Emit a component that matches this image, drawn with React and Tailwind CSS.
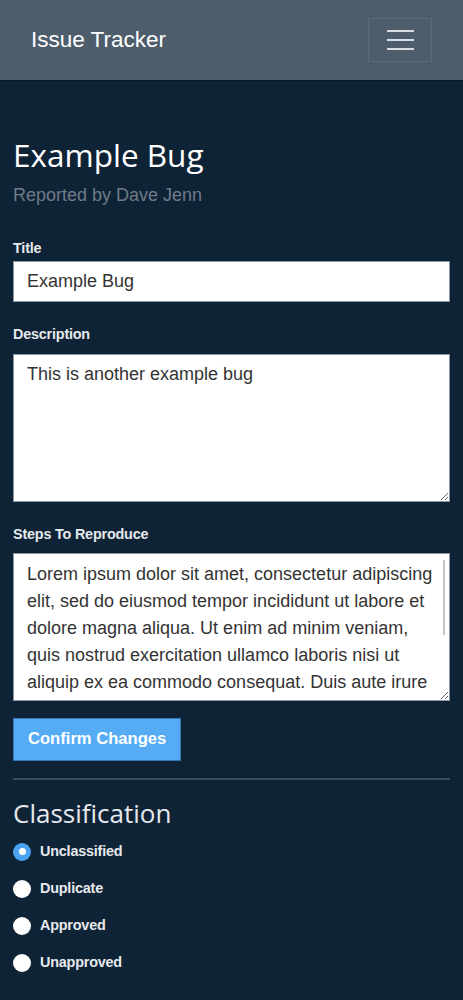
const steps =
    "Lorem ipsum dolor sit amet, consectetur adipiscing elit, sed do eiusmod tempor incididunt ut labore et dolore magna aliqua. Ut enim ad minim veniam, quis nostrud exercitation ullamco laboris nisi ut aliquip ex ea commodo consequat. Duis aute irure dolor in reprehenderit in voluptate velit esse cillum dolore eu fugiat nulla pariatur."

const options = ["Unclassified", "Duplicate", "Approved", "Unapproved"]

const App = () => {
    return (
        <div className="min-h-[1000px] bg-[#0f2337] font-['Liberation_Sans',Arial,sans-serif]">
            <nav className="h-[81px] bg-[#4e5d6c] border-b border-[#0c1b2a] flex items-center justify-between pl-[31px] pr-[31px]">
                <span className="text-[22.5px] text-white">Issue Tracker</span>
                <button className="w-[64px] h-[44px] border border-[#5b6a79] flex flex-col items-center justify-center gap-[7px]">
                    <span className="block w-[27px] h-[2px] bg-[#d9dde1]"></span>
                    <span className="block w-[27px] h-[2px] bg-[#d9dde1]"></span>
                    <span className="block w-[27px] h-[2px] bg-[#d9dde1]"></span>
                </button>
            </nav>

            <main className="px-[13px] pt-[54px]">
                <h1 className="font-['Open_Sans',sans-serif] text-[31.5px] leading-[40px] text-white">Example Bug</h1>
                <p className="text-[18px] leading-[27px] text-[#6f7b87] mt-[7px]">Reported by Dave Jenn</p>

                <label className="block text-[14.4px] leading-[20px] font-bold text-[#e6e9ec] mt-[29px] mb-[3px] tracking-[-0.2px]">Title</label>
                <input
                    className="w-full h-[41px] bg-white border border-[#8a96a3] px-[13px] text-[18px] text-[#333]"
                    defaultValue="Example Bug"
                />

                <label className="block text-[14.4px] leading-[20px] font-bold text-[#e6e9ec] mt-[22px] mb-[10px] tracking-[-0.2px]">Description</label>
                <textarea
                    className="block w-full h-[148px] bg-white border border-[#8a96a3] px-[13px] pt-[6px] pb-[7px] text-[18px] leading-[27px] text-[#333] overflow-hidden"
                    defaultValue="This is another example bug"
                />

                <label className="block text-[14.4px] leading-[20px] font-bold text-[#e6e9ec] mt-[22px] mb-[9px] tracking-[-0.2px]">Steps To Reproduce</label>
                <div className="relative">
                    <textarea
                        className="block w-full h-[148px] bg-white border border-[#8a96a3] pl-[13px] pr-[8px] py-[7px] text-[18px] leading-[27px] text-[#333] overflow-hidden"
                        defaultValue={steps}
                    />
                    <span className="absolute right-[5px] top-[7px] w-[2px] h-[75px] bg-[#c4c4c4]"></span>
                </div>

                <button className="mt-[17px] h-[43px] px-[14px] bg-[#55acf5] border border-[#3478b4] text-white text-[16.6px] font-bold">
                    Confirm Changes
                </button>

                <hr className="mt-[17px] border-t-2 border-[#3a4b5c]" />

                <h2 className="font-['Open_Sans',sans-serif] text-[26px] leading-[34px] text-[#e6e9ec] mt-[16px]">Classification</h2>

                <div className="mt-[3px] flex flex-col">
                    {options.map((o, i) => (
                        <label key={o} className="h-[37px] flex items-center gap-[9px]">
                            {i === 0 ? (
                                <span className="w-[18px] h-[18px] rounded-full bg-[#4aa3f3] flex items-center justify-center">
                                    <span className="w-[7px] h-[7px] rounded-full bg-white"></span>
                                </span>
                            ) : (
                                <span className="w-[18px] h-[18px] rounded-full bg-white"></span>
                            )}
                            <span className="text-[14.4px] font-bold text-[#e6e9ec] tracking-[-0.2px]">{o}</span>
                        </label>
                    ))}
                </div>
            </main>
        </div>
    )
}

export default App
